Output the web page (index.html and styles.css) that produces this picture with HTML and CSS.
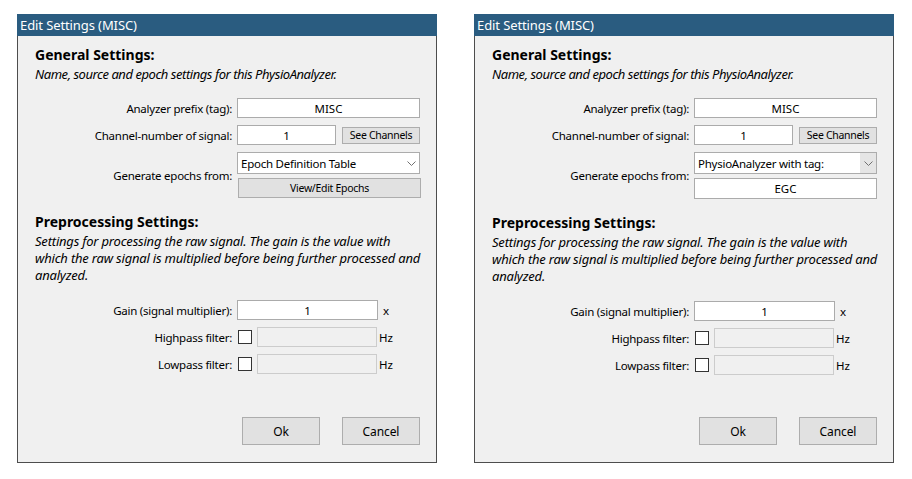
FILE: index.html
```html
<!DOCTYPE html>
<html>
<head>
<meta charset="utf-8">
<title>Edit Settings (MISC)</title>
<link rel="stylesheet" href="styles.css">
</head>
<body>
<div class="desk">
  <div class="dialog">
    <div class="titlebar">Edit Settings (MISC)</div>
    <div class="body">
      <h2 class="heading">General Settings:</h2>
      <p class="desc sub">Name, source and epoch settings for this PhysioAnalyzer.</p>
      <div class="form">
        <span class="lbl">Analyzer prefix (tag):</span>
        <div class="ctrl"><div class="input">MISC</div></div>
        <span class="lbl">Channel-number of signal:</span>
        <div class="ctrl split"><div class="input short">1</div><div class="btn small">See Channels</div></div>
        <span class="lbl">Generate epochs from:</span>
        <div class="ctrl stack">
          <div class="combo"><span class="combo-text">Epoch Definition Table</span><span class="arrow"><svg width="9" height="5" viewBox="0 0 9 5"><path d="M0.5 0.5 L4.5 4.5 L8.5 0.5" fill="none" stroke="#707070" stroke-width="1"/></svg></span></div>
          <div class="btn wide">View/Edit Epochs</div>
        </div>
      </div>
      <h2 class="heading second">Preprocessing Settings:</h2>
      <p class="desc long">Settings for processing the raw signal. The gain is the value with which the raw signal is multiplied before being further processed and analyzed.</p>
      <div class="form form2">
        <span class="lbl">Gain (signal multiplier):</span>
        <div class="ctrl line"><div class="input gain">1</div><span class="unit unit-x">x</span></div>
        <span class="lbl">Highpass filter:</span>
        <div class="ctrl line"><span class="check"></span><div class="input disabled"></div><span class="unit">Hz</span></div>
        <span class="lbl">Lowpass filter:</span>
        <div class="ctrl line"><span class="check"></span><div class="input disabled"></div><span class="unit">Hz</span></div>
      </div>
      <div class="actions">
        <div class="btn action">Ok</div>
        <div class="btn action">Cancel</div>
      </div>
    </div>
  </div>

  <div class="dialog">
    <div class="titlebar">Edit Settings (MISC)</div>
    <div class="body">
      <h2 class="heading">General Settings:</h2>
      <p class="desc sub">Name, source and epoch settings for this PhysioAnalyzer.</p>
      <div class="form">
        <span class="lbl">Analyzer prefix (tag):</span>
        <div class="ctrl"><div class="input">MISC</div></div>
        <span class="lbl">Channel-number of signal:</span>
        <div class="ctrl split"><div class="input short">1</div><div class="btn small">See Channels</div></div>
        <span class="lbl">Generate epochs from:</span>
        <div class="ctrl stack">
          <div class="combo"><span class="combo-text">PhysioAnalyzer with tag:</span><span class="arrow hot"><svg width="9" height="5" viewBox="0 0 9 5"><path d="M0.5 0.5 L4.5 4.5 L8.5 0.5" fill="none" stroke="#707070" stroke-width="1"/></svg></span></div>
          <div class="input tag">EGC</div>
        </div>
      </div>
      <h2 class="heading second">Preprocessing Settings:</h2>
      <p class="desc long">Settings for processing the raw signal. The gain is the value with which the raw signal is multiplied before being further processed and analyzed.</p>
      <div class="form form2">
        <span class="lbl">Gain (signal multiplier):</span>
        <div class="ctrl line"><div class="input gain">1</div><span class="unit unit-x">x</span></div>
        <span class="lbl">Highpass filter:</span>
        <div class="ctrl line"><span class="check"></span><div class="input disabled"></div><span class="unit">Hz</span></div>
        <span class="lbl">Lowpass filter:</span>
        <div class="ctrl line"><span class="check"></span><div class="input disabled"></div><span class="unit">Hz</span></div>
      </div>
      <div class="actions">
        <div class="btn action">Ok</div>
        <div class="btn action">Cancel</div>
      </div>
    </div>
  </div>
</div>
</body>
</html>
```

FILE: styles.css
```css
* { box-sizing: border-box; margin: 0; padding: 0; }

body {
  margin: 0;
  background: #ffffff;
  font-family: "Noto Sans", "Open Sans", sans-serif;
  color: #000;
}

.desk {
  display: flex;
  gap: 37px;
  padding: 14px 0 0 17px;
}

.dialog {
  width: 420px;
  height: 449px;
  border: 1px solid #4d4d4d;
  background: #f0f0f0;
  display: flex;
  flex-direction: column;
}

.titlebar {
  height: 22px;
  margin: -1px -1px 0 -1px;
  padding: 1px 0 0 3px;
  background: #2a5c80;
  color: #fff;
  font-size: 13px;
  letter-spacing: -0.1px;
  line-height: 21px;
}

.body {
  flex: 1;
  display: flex;
  flex-direction: column;
  padding: 0 16px 17px 17px;
}

.heading {
  font-size: 14px;
  font-weight: 700;
  line-height: 20px;
  margin-top: 9px;
}

.heading.second { margin-top: 14px; }

.desc {
  font-size: 13px;
  font-style: italic;
  line-height: 17px;
  margin-top: 1px;
}

.desc.sub { letter-spacing: -0.45px; }
.desc.long { letter-spacing: -0.2px; margin-right: -4px; }

.form {
  display: grid;
  grid-template-columns: 197px 183px;
  column-gap: 5px;
  row-gap: 7px;
  margin-top: 15px;
  font-size: 11.5px;
}

.form2 {
  grid-template-columns: 197px 200px;
  margin-top: 16px;
}

.lbl {
  display: flex;
  align-items: center;
  justify-content: flex-end;
  white-space: nowrap;
  font-size: 11.5px;
  letter-spacing: -0.25px;
}

.ctrl { display: flex; }
.ctrl.split { gap: 6px; align-items: center; }
.ctrl.stack { flex-direction: column; gap: 4px; }
.ctrl.line { align-items: center; }

.input {
  height: 20px;
  width: 100%;
  border: 1px solid #ababab;
  background: #fff;
  font-size: 11.5px;
  display: flex;
  align-items: center;
  justify-content: center;
}

.input.short { width: 99px; flex: none; }
.input.gain { width: 141px; flex: none; }
.input.tag { height: 21px; }
.input.disabled {
  width: 120px;
  flex: none;
  background: #f0f0f0;
  border-color: #cccccc;
}

.unit { margin-left: 2px; font-size: 11.5px; }
.unit.unit-x { margin-left: 5px; }

.check {
  width: 14px;
  height: 14px;
  border: 1px solid #333;
  background: #fff;
  margin: 0 5px 0 1px;
  flex: none;
}

.btn {
  background: #e1e1e1;
  border: 1px solid #adadad;
  font-size: 10.5px;
  letter-spacing: -0.3px;
  display: flex;
  align-items: center;
  justify-content: center;
  white-space: nowrap;
}

.btn.small { width: 78px; height: 17px; }
.btn.wide { height: 20px; width: 100%; margin-left: 1px; }

.combo {
  height: 22px;
  border: 1px solid #acacac;
  background: #fff;
  display: flex;
  align-items: stretch;
}

.combo-text {
  flex: 1;
  font-size: 11.5px;
  letter-spacing: -0.25px;
  padding-left: 3px;
  display: flex;
  align-items: center;
}

.arrow {
  width: 16px;
  display: flex;
  align-items: center;
  justify-content: center;
}

.arrow.hot { background: #e5e5e5; }

.actions {
  margin-top: auto;
  display: flex;
  justify-content: flex-end;
  gap: 22px;
}

.btn.action {
  width: 78px;
  height: 28px;
  font-size: 12px;
  letter-spacing: -0.1px;
}
```
